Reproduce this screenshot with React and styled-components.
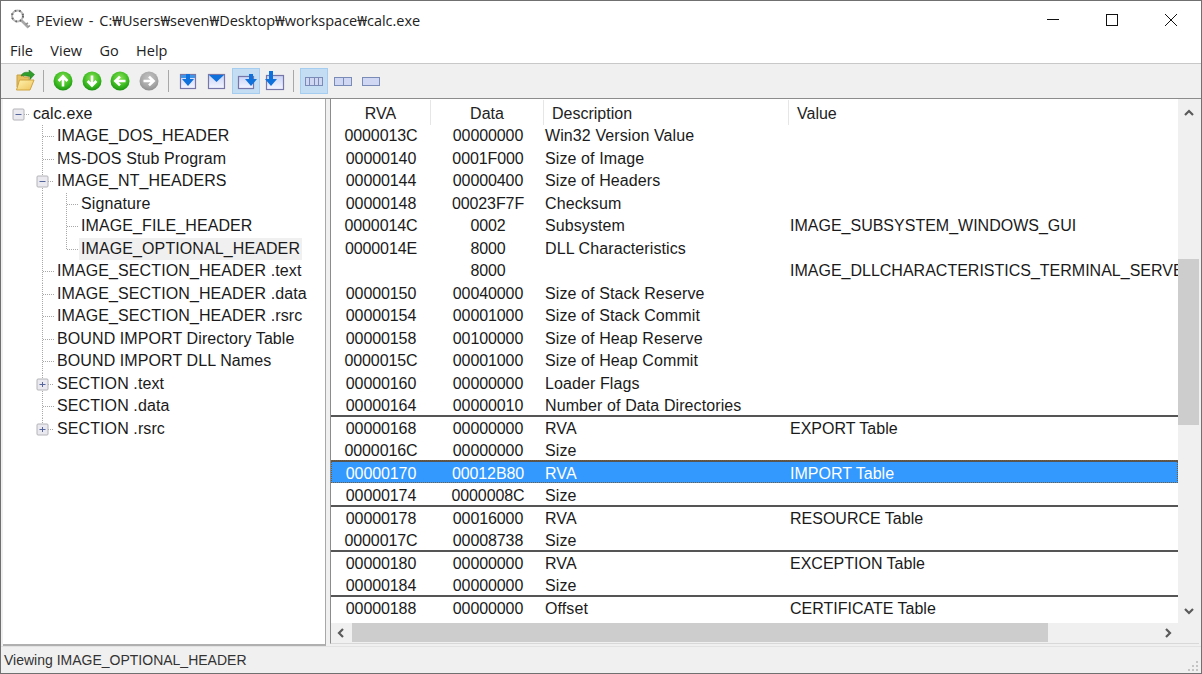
import React from "react";
import styled, { createGlobalStyle } from "styled-components";

const Global = createGlobalStyle`
  html, body { margin: 0; padding: 0; background: #fff; }
  * { box-sizing: border-box; }
`;

const UI = `"Open Sans", "Noto Sans", sans-serif`;
const LIST = `"Liberation Sans", Arial, sans-serif`;

const Win = styled.div`
  width: 1202px; height: 674px; display: flex; flex-direction: column;
  border: 1px solid #707070; background: #f0f0f0; overflow: hidden;
  font-family: ${LIST}; color: #1a1a1a;
`;
const TitleBar = styled.div`
  height: 37px; background: #fff; display: flex; align-items: center; padding: 0 1px 0 9px; flex: none;
`;
const TitleText = styled.span`
  font: 14.5px ${UI}; word-spacing: 2px; margin-left: 5px; flex: 1; color: #222; white-space: nowrap;
`;
const WinBtn = styled.span`
  width: 58.7px; height: 37px; display: flex; align-items: center; justify-content: center;
`;
const MenuBar = styled.div`
  height: 26px; background: #fff; display: flex; align-items: center; gap: 17.4px; padding-left: 9px;
  font: 14.5px ${UI}; color: #222; flex: none; border-bottom: 1px solid #c8c8c8;
`;
const Toolbar = styled.div`
  height: 34px; display: flex; align-items: center; padding-left: 10px; flex: none;
`;
const ToolBtn = styled.span`
  width: 28.67px; height: 26px; display: flex; align-items: center; justify-content: center; flex: none;
  margin-left: ${p => p.$shift || 0}px;
  background: ${p => (p.$on ? "#c4ddf3" : "transparent")};
  box-shadow: ${p => (p.$on ? "inset 0 0 0 1px #a4cdf0" : "none")};
`;
const ToolSep = styled.span`
  width: ${p => p.$w}px; height: 22px; display: flex; justify-content: flex-start; padding-left: ${p => p.$l}px; flex: none;
  &::before { content: ""; width: 1px; background: #a8a8a8; }
`;
const Body = styled.div`
  flex: 1; min-height: 0; display: flex; padding: 0 2px; border-top: 1px solid #8c8c8c;
`;
const TreePane = styled.div`
  width: 323px; background: #fff; border-right: 1px solid #a8a8a8; border-bottom: 2px solid #b0b0b0;
  padding: 3.5px 0 0 4px; font-size: 16px; letter-spacing: 0.1px; margin-right: 4px; flex: none;
`;
const TreeRow = styled.div`
  height: 22.5px; display: flex; align-items: stretch; white-space: nowrap;
`;
const Cell = styled.svg`
  width: 24px; height: 22.5px; flex: none; display: block;
`;
const Label = styled.span`
  padding: 0 2px; line-height: 22.5px; background: ${p => (p.$sel ? "#f0f0f0" : "transparent")};
`;
const ListPane = styled.div`
  flex: 1; min-width: 0; display: grid; grid-template-columns: 1fr 21px; grid-template-rows: 1fr 20px;
  background: #f0f0f0; border-left: 1px solid #8c8c8c; border-bottom: 1px solid #d8d8d8; margin-bottom: 2px;
`;
const Table = styled.div`
  background: #fff; overflow: hidden; font-size: 16px; padding-top: 1px;
`;
const Grid = styled.div`
  display: grid; grid-template-columns: 100px 113px 245px 1fr; height: 22.5px; line-height: 22px; white-space: nowrap;
`;
const Head = styled(Grid)`
  color: #222;
`;
const HeadCell = styled.span`
  text-align: ${p => (p.$c ? "center" : "left")}; padding: 2.5px 0 0 ${p => (p.$c ? 0 : 8)}px;
  border-right: ${p => (p.$last ? "none" : "1px solid #e6e6e6")};
`;
const Row = styled(Grid)`
  background: ${p => (p.$sel ? "#3399ff" : "#fff")};
  color: ${p => (p.$sel ? "#fff" : "#1a1a1a")};
  border-top: ${p => (p.$sep ? "2px solid #555" : "none")};
  padding-top: ${p => (p.$sep ? "0.5px" : "2.5px")};
  outline: ${p => (p.$sel ? "1px dotted #7a5a30" : "none")};
  outline-offset: -1px;
`;
const Num = styled.span`text-align: center; letter-spacing: -0.1px; padding-left: ${p => (p.$data ? 1 : 0)}px;`;
const Txt = styled.span`padding-left: 1px; letter-spacing: ${p => (p.$value ? 0 : 0.1)}px; overflow: hidden;`;
const VBar = styled.div`
  display: flex; flex-direction: column; align-items: stretch; background: #f0f0f0;
`;
const Arrow = styled.span`
  height: ${p => p.$h}px; flex: none; display: flex; align-items: center; justify-content: center;
`;
const VThumb = styled.span`
  height: 166px; background: #cdcdcd; margin-top: 133px; flex: none;
`;
const VGap = styled.span`flex: 1;`;
const HBar = styled.div`display: flex; align-items: stretch; background: #f0f0f0;`;
const HArrow = styled.span`
  width: 20px; flex: none; display: flex; align-items: center; justify-content: center;
`;
const HThumb = styled.span`
  width: 696px; margin-left: 1px; background: #cdcdcd; margin-bottom: 1px;
`;
const Corner = styled.div`background: #f0f0f0;`;
const Status = styled.div`
  height: 27px; flex: none; display: flex; align-items: center; justify-content: space-between;
  padding: 0 1px 0 3px; font: 14px ${LIST}; color: #333; border-top: 1px solid #e2e2e2;
`;
const Grip = styled.svg`width: 14px; height: 14px; align-self: flex-end;`;

const LINE = "#a8a8a8";
function Guide() {
  return <Cell viewBox="0 0 24 22.5"><line x1="11.5" y1="0" x2="11.5" y2="22.5" stroke={LINE} strokeDasharray="1 1" /></Cell>;
}
function Blank() { return <Cell viewBox="0 0 24 22.5" />; }
function Conn({ last, box, root }) {
  return (
    <Cell viewBox="0 0 24 22.5">
      {!root && <line x1="11.5" y1="0" x2="11.5" y2={last ? 11 : 22.5} stroke={LINE} strokeDasharray="1 1" />}
      <line x1={box ? 17 : 12} y1="11.5" x2="23" y2="11.5" stroke={LINE} strokeDasharray="1 1" />
      {box && (
        <g>
          <rect x="6" y="6" width="11" height="11" rx="1" fill="#e9e9ef" stroke="#b4b4b8" />
          <line x1="8.5" y1="11.5" x2="14.5" y2="11.5" stroke="#55669c" />
          {box === "+" && <line x1="11.5" y1="9" x2="11.5" y2="14" stroke="#55669c" />}
        </g>
      )}
    </Cell>
  );
}

const tree = [
  { l: 0, t: "calc.exe", box: "-", root: true },
  { l: 1, t: "IMAGE_DOS_HEADER" },
  { l: 1, t: "MS-DOS Stub Program" },
  { l: 1, t: "IMAGE_NT_HEADERS", box: "-" },
  { l: 2, t: "Signature" },
  { l: 2, t: "IMAGE_FILE_HEADER" },
  { l: 2, t: "IMAGE_OPTIONAL_HEADER", last: true, sel: true },
  { l: 1, t: "IMAGE_SECTION_HEADER .text" },
  { l: 1, t: "IMAGE_SECTION_HEADER .data" },
  { l: 1, t: "IMAGE_SECTION_HEADER .rsrc" },
  { l: 1, t: "BOUND IMPORT Directory Table" },
  { l: 1, t: "BOUND IMPORT DLL Names" },
  { l: 1, t: "SECTION .text", box: "+" },
  { l: 1, t: "SECTION .data" },
  { l: 1, t: "SECTION .rsrc", box: "+", last: true },
];

const rows = [
  ["0000013C", "00000000", "Win32 Version Value", ""],
  ["00000140", "0001F000", "Size of Image", ""],
  ["00000144", "00000400", "Size of Headers", ""],
  ["00000148", "00023F7F", "Checksum", ""],
  ["0000014C", "0002", "Subsystem", "IMAGE_SUBSYSTEM_WINDOWS_GUI"],
  ["0000014E", "8000", "DLL Characteristics", ""],
  ["", "8000", "", "IMAGE_DLLCHARACTERISTICS_TERMINAL_SERVER_AWARE"],
  ["00000150", "00040000", "Size of Stack Reserve", ""],
  ["00000154", "00001000", "Size of Stack Commit", ""],
  ["00000158", "00100000", "Size of Heap Reserve", ""],
  ["0000015C", "00001000", "Size of Heap Commit", ""],
  ["00000160", "00000000", "Loader Flags", ""],
  ["00000164", "00000010", "Number of Data Directories", ""],
  ["00000168", "00000000", "RVA", "EXPORT Table", "sep"],
  ["0000016C", "00000000", "Size", ""],
  ["00000170", "00012B80", "RVA", "IMPORT Table", "sepsel"],
  ["00000174", "0000008C", "Size", ""],
  ["00000178", "00016000", "RVA", "RESOURCE Table", "sep"],
  ["0000017C", "00008738", "Size", ""],
  ["00000180", "00000000", "RVA", "EXCEPTION Table", "sep"],
  ["00000184", "00000000", "Size", ""],
  ["00000188", "00000000", "Offset", "CERTIFICATE Table", "sep"],
];

const Round = ({ dir, off }) => {
  const rot = { up: 0, right: 90, down: 180, left: 270 }[dir];
  const id = "c" + dir;
  return (
    <svg width="20" height="20" viewBox="0 0 20 20">
      <defs>
        <radialGradient id={id} cx="50%" cy="35%" r="65%">
          <stop offset="0" stopColor={off ? "#c4c4c4" : "#8ee35a"} />
          <stop offset="0.65" stopColor={off ? "#a8a8a8" : "#3bbb20"} />
          <stop offset="1" stopColor={off ? "#909090" : "#1c9212"} />
        </radialGradient>
      </defs>
      <circle cx="10" cy="10" r="9.5" fill={`url(#${id})`} />
      <g transform={`rotate(${rot} 10 10)`}>
        <path d="M10 15.5V6M5.6 10 10 5.4l4.4 4.6" fill="none" stroke="#fff" strokeWidth="2.6" />
      </g>
    </svg>
  );
};
const DocGrad = () => (
  <defs>
    <linearGradient id="docg" x1="0" y1="0" x2="0" y2="1">
      <stop offset="0" stopColor="#c9d4f6" />
      <stop offset="1" stopColor="#f4f5ff" />
    </linearGradient>
  </defs>
);
const Box = ({ x, y, w, h }) => (
  <rect x={x + 0.5} y={y + 0.5} width={w - 1} height={h - 1} fill="url(#docg)" stroke="#7676a8" strokeWidth="1.2" />
);
const BlueArrow = ({ cx, top, mid, tip }) => (
  <path d={`M${cx - 2} ${top}h4V${mid}h4L${cx} ${tip} ${cx - 6} ${mid}h4z`} fill="#0f72dc" />
);
const DocA = () => (
  <svg width="20" height="20" viewBox="0 0 20 20">
    <DocGrad />
    <Box x={3} y={3} w={16} h={15} />
    <rect x="4" y="4" width="14" height="3" fill="#3f95e8" />
    <BlueArrow cx={11} top={3} mid={8} tip={15} />
  </svg>
);
const DocB = () => (
  <svg width="20" height="20" viewBox="0 0 20 20">
    <Box x={2} y={3} w={17} h={15} />
    <path d="M3 4h15l-7.5 7z" fill="#0f72dc" />
  </svg>
);
const DocC = () => (
  <svg width="22" height="20" viewBox="0 0 22 20">
    <Box x={3} y={5} w={16} h={13} />
    <BlueArrow cx={16} top={3} mid={8} tip={15} />
  </svg>
);
const DocD = () => (
  <svg width="22" height="22" viewBox="0 0 22 22">
    <Box x={2} y={5} w={18} h={15} />
    <BlueArrow cx={7} top={1} mid={9} tip={16} />
  </svg>
);
const ViewIcon = ({ n }) => (
  <svg width="18" height="9" viewBox="0 0 18 9">
    <rect x="0.5" y="0.5" width="17" height="8" fill="#cfd7f2" stroke="#7b8bb8" />
    {Array.from({ length: n - 1 }).map((_, i) => (
      <line key={i} x1={Math.round(((i + 1) * 17) / n) + 0.5} x2={Math.round(((i + 1) * 17) / n) + 0.5} y1="1" y2="8" stroke="#7b8bb8" />
    ))}
  </svg>
);
const FolderIcon = () => (
  <svg width="22" height="22" viewBox="0 0 22 22">
    <defs>
      <linearGradient id="fold" x1="0" y1="0" x2="1" y2="1">
        <stop offset="0" stopColor="#fff3b0" />
        <stop offset="1" stopColor="#eec35a" />
      </linearGradient>
    </defs>
    <path d="M3 5h5l2 2h5v10H3z" fill="#e8c060" stroke="#c9a040" />
    <path d="M2.5 20 5.5 10H20l-4 10z" fill="url(#fold)" stroke="#d0a440" />
    <path d="M7 6c1-3 4-4.500 8-3.500V0l5.500 4.500-4.500 5V6.500C12 5.500 9.500 5.500 7 6z" fill="#2f9e2a" stroke="#1d6e1b" strokeWidth=".5" />
  </svg>
);
const KeyIcon = () => (
  <svg width="21" height="22" viewBox="0 0 21 22">
    <circle cx="7.5" cy="7" r="5.500" fill="none" stroke="#b8b8b8" strokeWidth="2" />
    <circle cx="7.5" cy="7" r="5.500" fill="none" stroke="#666" strokeWidth="2" strokeDasharray="1.500 3" />
    <path d="m11.500 11.500 7 7" stroke="#a8a8a8" strokeWidth="2.600" />
    <path d="m15.500 15.500 2.500-1.500M18 18l2-1.500" stroke="#909090" strokeWidth="1.500" />
  </svg>
);

const Chevron = ({ rot }) => (
  <svg width="10" height="10" viewBox="0 0 10 10">
    <path transform={`rotate(${rot} 5 5)`} d="M1 7l4-4 4 4" fill="none" stroke="#5a5a5a" strokeWidth="2.200" />
  </svg>
);

export default function App() {
  return (
    <>
      <Global />
      <Win>
        <TitleBar>
          <KeyIcon />
          <TitleText>PEview - C:₩Users₩seven₩Desktop₩workspace₩calc.exe</TitleText>
          <WinBtn><svg width="12" height="12"><line x1="0" x2="12" y1="5.5" y2="5.500" stroke="#111" /></svg></WinBtn>
          <WinBtn><svg width="12" height="12"><rect x=".5" y=".5" width="11" height="11" fill="none" stroke="#111" /></svg></WinBtn>
          <WinBtn><svg width="12" height="12"><path d="M0 0l12 12M12 0 0 12" stroke="#111" /></svg></WinBtn>
        </TitleBar>
        <MenuBar><span>File</span><span>View</span><span>Go</span><span>Help</span></MenuBar>
        <Toolbar>
          <ToolBtn><FolderIcon /></ToolBtn>
          <ToolSep $w={9} $l={3.4} />
          <ToolBtn><Round dir="up" /></ToolBtn>
          <ToolBtn><Round dir="down" /></ToolBtn>
          <ToolBtn><Round dir="left" /></ToolBtn>
          <ToolBtn><Round dir="right" off /></ToolBtn>
          <ToolSep $w={9.35} $l={4.6} />
          <ToolBtn><DocA /></ToolBtn>
          <ToolBtn><DocB /></ToolBtn>
          <ToolBtn $on $shift={1.7}><DocC /></ToolBtn>
          <ToolBtn><DocD /></ToolBtn>
          <ToolSep $w={10.9} $l={3.8} />
          <ToolBtn $on><ViewIcon n={4} /></ToolBtn>
          <ToolBtn><ViewIcon n={2} /></ToolBtn>
          <ToolBtn><ViewIcon n={1} /></ToolBtn>
        </Toolbar>
        <Body>
          <TreePane>
            {tree.map((n, i) => (
              <TreeRow key={i}>
                {n.l >= 1 && <Blank />}
                {n.l === 2 && <Guide />}
                <Conn box={n.box} last={n.last} root={n.root} />
                <Label $sel={n.sel}>{n.t}</Label>
              </TreeRow>
            ))}
          </TreePane>
          <ListPane>
            <Table>
              <Head>
                <HeadCell $c>RVA</HeadCell>
                <HeadCell $c>Data</HeadCell>
                <HeadCell>Description</HeadCell>
                <HeadCell $last>Value</HeadCell>
              </Head>
              {rows.map((r, i) => (
                <Row key={i} $sep={r[4]} $sel={r[4] === "sepsel"}>
                  <Num>{r[0]}</Num><Num $data>{r[1]}</Num><Txt>{r[2]}</Txt><Txt $value>{r[3]}</Txt>
                </Row>
              ))}
            </Table>
            <VBar>
              <Arrow $h={27}><Chevron rot={0} /></Arrow>
              <VThumb />
              <VGap />
              <Arrow $h={24}><Chevron rot={180} /></Arrow>
            </VBar>
            <HBar>
              <HArrow><Chevron rot={270} /></HArrow>
              <HThumb />
              <VGap />
              <HArrow><Chevron rot={90} /></HArrow>
            </HBar>
            <Corner />
          </ListPane>
        </Body>
        <Status>
          <span>Viewing IMAGE_OPTIONAL_HEADER</span>
          <Grip viewBox="0 0 14 14">
            {[[10,2],[10,6],[6,6],[10,10],[6,10],[2,10]].map(([x,y],i)=>(<rect key={i} x={x} y={y} width="2" height="2" fill="#c4c4c4" />))}
          </Grip>
        </Status>
      </Win>
    </>
  );
}
